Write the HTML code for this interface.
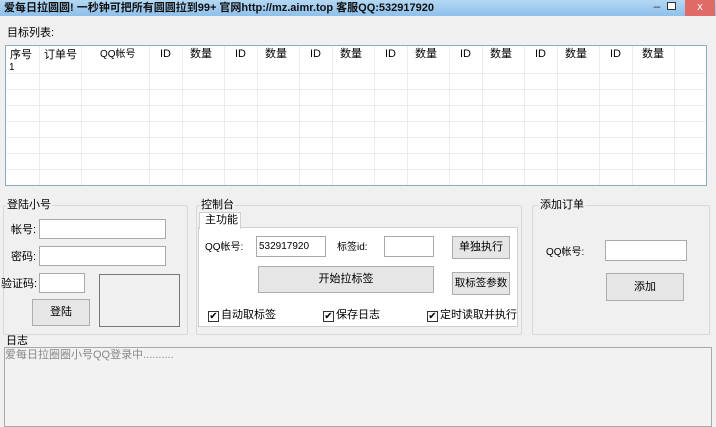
<!DOCTYPE html>
<html><head><meta charset="utf-8"><style>
*{box-sizing:border-box;margin:0;padding:0}
body{width:716px;height:422px;overflow:hidden;background:#f0f0f0;font-family:"Liberation Sans","Noto Sans CJK SC",sans-serif;font-size:12px;line-height:14px;color:#000;position:relative}
.a{position:absolute;white-space:nowrap}
.tb{left:0;top:0;width:716px;height:16px;background:linear-gradient(#b4d8f3,#8ec0ea);}
.in{position:absolute;background:#fff;border:1px solid #a9a9a9}
.btn{position:absolute;background:#e6e6e6;border:1px solid #adadad;text-align:center;font-size:11px;white-space:nowrap}
.grp{position:absolute;border:1px solid #d8d8d8;border-radius:2px}
.cb{display:inline-block;width:11px;height:11px;border:1px solid #333;background:#fff;font-size:10px;line-height:9px;text-align:center;vertical-align:-1px;margin-right:2px}
</style></head><body>
<div class="a tb"></div>
<div class="a" style="left:4px;top:1px;font-size:11px;font-weight:bold;color:#111">爱每日拉圆圆! 一秒钟可把所有圆圆拉到99+ 官网http://mz.aimr.top 客服QQ:532917920</div>
<div class="a" style="left:645px;top:0;width:24px;height:16px;font-size:12px;text-align:center;color:#333;line-height:12px">–</div>
<div class="a" style="left:667px;top:2px;width:9px;height:8px;border:1px solid #333;background:#fff;"></div>
<div class="a" style="left:685px;top:0;width:30px;height:16px;background:#e06a66;color:#fff;text-align:center;font-size:11px;line-height:15px">x</div>

<div class="a" style="left:7px;top:26px;font-size:11px">目标列表:</div>
<div class="a" style="left:5px;top:45px;width:702px;height:141px;background:#fff;border:1px solid #8fa9c9;overflow:hidden">
<svg width="702" height="141" style="position:absolute;left:0;top:0">
<g stroke="#ececec" stroke-width="1">
<line x1="33.5" y1="0" x2="33.5" y2="141"/><line x1="75.5" y1="0" x2="75.5" y2="141"/><line x1="143.5" y1="0" x2="143.5" y2="141"/>
<line x1="176.5" y1="0" x2="176.5" y2="141"/><line x1="218.5" y1="0" x2="218.5" y2="141"/><line x1="251.5" y1="0" x2="251.5" y2="141"/><line x1="293.5" y1="0" x2="293.5" y2="141"/><line x1="326.5" y1="0" x2="326.5" y2="141"/><line x1="368.5" y1="0" x2="368.5" y2="141"/><line x1="401.5" y1="0" x2="401.5" y2="141"/><line x1="443.5" y1="0" x2="443.5" y2="141"/><line x1="476.5" y1="0" x2="476.5" y2="141"/><line x1="518.5" y1="0" x2="518.5" y2="141"/><line x1="551.5" y1="0" x2="551.5" y2="141"/><line x1="593.5" y1="0" x2="593.5" y2="141"/><line x1="626.5" y1="0" x2="626.5" y2="141"/><line x1="668.5" y1="0" x2="668.5" y2="141"/>
<line x1="0" y1="27.5" x2="702" y2="27.5"/><line x1="0" y1="43.5" x2="702" y2="43.5"/><line x1="0" y1="59.5" x2="702" y2="59.5"/><line x1="0" y1="75.5" x2="702" y2="75.5"/><line x1="0" y1="91.5" x2="702" y2="91.5"/><line x1="0" y1="107.5" x2="702" y2="107.5"/><line x1="0" y1="123.5" x2="702" y2="123.5"/><line x1="0" y1="139.5" x2="702" y2="139.5"/>
</g></svg>
<div class="a" style="left:4px;top:2px;font-size:11px">序号</div>
<div class="a" style="left:38px;top:2px;font-size:11px">订单号</div>
<div class="a" style="left:94px;top:2px;font-size:10px">QQ帐号</div>
<div class="a" style="left:3px;top:17px;font-size:10px;line-height:10px">1</div>
</div>
<div class="a" style="left:0;top:47px;font-size:11px">
<span class="a" style="left:160px">ID</span><span class="a" style="left:190px">数量</span>
<span class="a" style="left:235px">ID</span><span class="a" style="left:265px">数量</span>
<span class="a" style="left:310px">ID</span><span class="a" style="left:340px">数量</span>
<span class="a" style="left:385px">ID</span><span class="a" style="left:415px">数量</span>
<span class="a" style="left:460px">ID</span><span class="a" style="left:490px">数量</span>
<span class="a" style="left:535px">ID</span><span class="a" style="left:565px">数量</span>
<span class="a" style="left:610px">ID</span><span class="a" style="left:642px">数量</span>
</div>

<div class="grp" style="left:3px;top:205px;width:185px;height:130px"></div>
<div class="a" style="left:6px;top:198px;background:#f0f0f0;padding:0 1px;font-size:11px">登陆小号</div>
<div class="a" style="left:11px;top:223px;font-size:11px">帐号:</div>
<div class="in" style="left:39px;top:219px;width:127px;height:20px"></div>
<div class="a" style="left:11px;top:250px;font-size:11px">密码:</div>
<div class="in" style="left:39px;top:246px;width:127px;height:20px"></div>
<div class="a" style="left:1px;top:277px;font-size:11px">验证码:</div>
<div class="in" style="left:39px;top:273px;width:46px;height:20px"></div>
<div class="in" style="left:99px;top:274px;width:81px;height:53px;background:#f0f0f0;border-color:#777"></div>
<div class="btn" style="left:32px;top:299px;width:58px;height:27px;line-height:25px">登陆</div>

<div class="grp" style="left:196px;top:205px;width:326px;height:130px"></div>
<div class="a" style="left:200px;top:198px;background:#f0f0f0;padding:0 1px;font-size:11px">控制台</div>
<div class="a" style="left:198px;top:227px;width:320px;height:100px;background:#fff;border:1px solid #d0d0d0"></div>
<div class="a" style="left:199px;top:212px;width:42px;height:17px;background:#fff;border:1px solid #d0d0d0;border-bottom:none;padding-left:5px;line-height:15px;font-size:11px">主功能</div>
<div class="a" style="left:205px;top:241px;font-size:10px">QQ帐号:</div>
<div class="in" style="left:256px;top:236px;width:70px;height:21px;font-size:10px;padding:3px 2px">532917920</div>
<div class="a" style="left:337px;top:241px;font-size:10px">标签id:</div>
<div class="in" style="left:384px;top:236px;width:50px;height:21px"></div>
<div class="btn" style="left:452px;top:236px;width:58px;height:23px;line-height:21px">单独执行</div>
<div class="btn" style="left:258px;top:266px;width:176px;height:27px;line-height:25px">开始拉标签</div>
<div class="btn" style="left:452px;top:272px;width:58px;height:23px;line-height:21px;font-size:10.5px">取标签参数</div>
<div class="a" style="left:208px;top:308px;font-size:11px"><span class="cb">✔</span>自动取标签</div>
<div class="a" style="left:323px;top:308px;font-size:11px"><span class="cb">✔</span>保存日志</div>
<div class="a" style="left:427px;top:308px;font-size:11px"><span class="cb">✔</span>定时读取并执行</div>

<div class="grp" style="left:532px;top:205px;width:178px;height:130px"></div>
<div class="a" style="left:539px;top:198px;background:#f0f0f0;padding:0 1px;font-size:11px">添加订单</div>
<div class="a" style="left:546px;top:246px;font-size:10px">QQ帐号:</div>
<div class="in" style="left:605px;top:240px;width:82px;height:21px"></div>
<div class="btn" style="left:606px;top:273px;width:78px;height:28px;line-height:26px">添加</div>

<div class="a" style="left:6px;top:334px;font-size:11px">日志</div>
<div class="a" style="left:4px;top:347px;width:708px;height:80px;border:1px solid #a9a9a9;background:#f2f2f2"></div>
<div class="a" style="left:5px;top:348px;font-size:11px;color:#888">爱每日拉圈圈小号QQ登录中..........</div>
</body></html>
